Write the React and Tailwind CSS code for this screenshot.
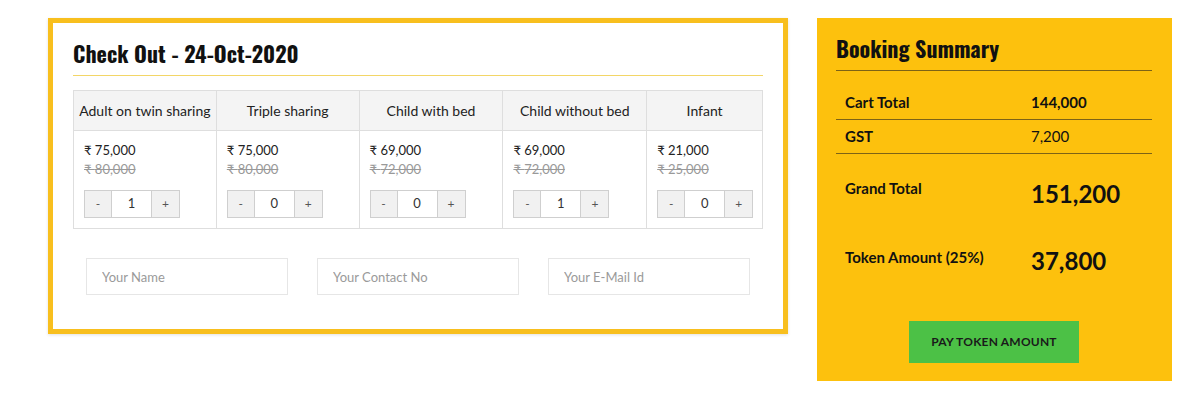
import React from 'react'

const rooms = [
  { name: 'Adult on twin sharing', price: '75,000', old: '80,000', qty: 1, w: 'w-[143px]' },
  { name: 'Triple sharing', price: '75,000', old: '80,000', qty: 0, w: 'w-[143px]' },
  { name: 'Child with bed', price: '69,000', old: '72,000', qty: 0, w: 'w-[144px]' },
  { name: 'Child without bed', price: '69,000', old: '72,000', qty: 1, w: 'w-[144px]' },
  { name: 'Infant', price: '21,000', old: '25,000', qty: 0, w: 'w-[116px]' },
]

const heading = { fontFamily: '"Oswald", "Liberation Sans Narrow", "DejaVu Sans Condensed", "Roboto Condensed", sans-serif' }

const Stepper = ({ qty }) => (
  <div className="flex h-[28px] text-[13px] text-[#333]">
    <button className="w-[28px] h-full bg-[#f1f1f1] border border-[#cfcfcf] text-[#555] text-[12px]">-</button>
    <div className="w-[39px] h-full bg-white border-y border-[#cfcfcf] flex items-center justify-center">{qty}</div>
    <button className="w-[29px] h-full bg-[#f1f1f1] border border-[#cfcfcf] text-[#555] text-[12px]">+</button>
  </div>
)

const SummaryRow = ({ label, value, bold }) => (
  <div className="flex items-center pl-[9px] text-[15px] text-[#111]">
    <div className="w-[186px] font-bold">{label}</div>
    <div className={bold ? 'font-bold' : ''}>{value}</div>
  </div>
)

export default function App() {
  return (
    <div className="w-[1200px] h-[403px] bg-white flex items-start pt-[18px] pl-[48px] gap-[29px]" style={{ fontFamily: 'Lato, "Open Sans", sans-serif' }}>

      {/* check out card */}
      <div className="w-[740px] h-[316px] border-[5px] border-[#f8bf1e] bg-white px-[20px] pt-[15px] shadow-[0_1px_3px_rgba(0,0,0,0.12)]">
        <h2 className="text-[22px] leading-[30px] font-bold text-[#111] pb-[7px] border-b border-[#f3d667]" style={heading}>
          Check Out - 24-Oct-2020
        </h2>

        {/* room table */}
        <div className="mt-[14px] flex border-l border-[#dedede]">
          {rooms.map((r) => (
            <div key={r.name} className={`${r.w} border-r border-y border-[#dedede]`}>
              <div className="h-[40px] bg-[#f4f4f4] border-b border-[#dedede] flex items-center justify-center text-[14px] text-[#222] whitespace-nowrap">
                {r.name}
              </div>
              <div className="h-[97px] pl-[10px] pt-[10px]">
                <div className="text-[13px] leading-[19px] text-[#222]">₹ {r.price}</div>
                <div className="text-[13px] leading-[19px] text-[#999] line-through">₹ {r.old}</div>
                <div className="mt-[11px]">
                  <Stepper qty={r.qty} />
                </div>
              </div>
            </div>
          ))}
        </div>

        {/* contact inputs */}
        <div className="mt-[29px] px-[13px] flex gap-[29px]">
          {['Your Name', 'Your Contact No', 'Your E-Mail Id'].map((p) => (
            <input
              key={p}
              placeholder={p}
              className="w-[202px] h-[37px] border border-[#e6e6e6] px-[15px] text-[13px] placeholder:text-[#9a9a9a] outline-none"
            />
          ))}
        </div>
      </div>

      {/* booking summary */}
      <div className="w-[355px] h-[363px] bg-[#fdc10d] pl-[19px] pr-[20px] pt-[14px]">
        <h2 className="text-[22px] leading-[32px] font-bold text-[#111] pb-[6px] border-b border-[#7d6316]" style={heading}>
          Booking Summary
        </h2>
        <div className="mt-[14px]">
          <div className="h-[35px] border-b border-[#7d6316] flex items-center">
            <div className="w-full"><SummaryRow label="Cart Total" value="144,000" bold /></div>
          </div>
          <div className="h-[34px] border-b border-[#7d6316] flex items-center">
            <div className="w-full"><SummaryRow label="GST" value="7,200" /></div>
          </div>
          <div className="h-[67px] pt-[23px] pl-[9px] flex items-start text-[#111]">
            <div className="w-[186px] text-[15px] font-bold leading-[20px] pt-[1px]">Grand Total</div>
            <div className="text-[24px] font-bold leading-[34px]">151,200</div>
          </div>
          <div className="h-[77px] pt-[23px] pl-[9px] flex items-start text-[#111]">
            <div className="w-[186px] text-[15px] font-bold leading-[20px] pt-[3px]">Token Amount (25%)</div>
            <div className="text-[24px] font-bold leading-[34px]">37,800</div>
          </div>
        </div>
        <div className="mt-[23px] flex justify-center">
          <button className="w-[170px] h-[42px] bg-[#4cc146] text-[12px] font-bold text-[#1a1a1a] tracking-[0.2px]">
            PAY TOKEN AMOUNT
          </button>
        </div>
      </div>
    </div>
  )
}
